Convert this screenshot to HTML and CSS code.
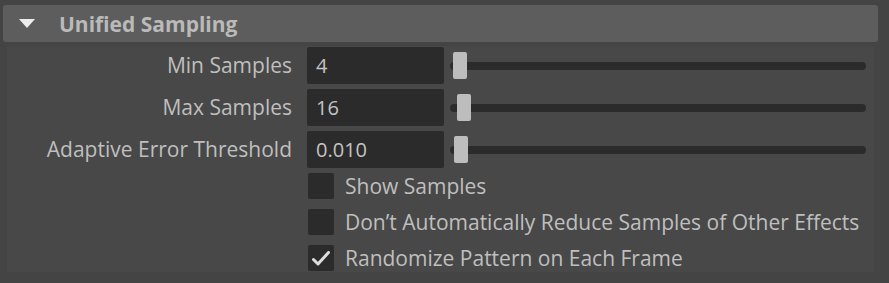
FILE: index.html
```html
<!DOCTYPE html>
<html lang="en">
<head>
    <meta charset="UTF-8">
    <title>Unified Sampling</title>
    <link rel="stylesheet" href="styles.css">
</head>
<body>
    <div class="section">
        <div class="section-header">
            <span class="arrow"></span>
            <span class="section-title">Unified Sampling</span>
        </div>
        <div class="section-body">
            <div class="field-row">
                <label class="field-label">Min Samples</label>
                <input class="field-input" type="text" value="4">
                <div class="slider"><span class="slider-thumb thumb-min"></span></div>
            </div>
            <div class="field-row">
                <label class="field-label">Max Samples</label>
                <input class="field-input" type="text" value="16">
                <div class="slider"><span class="slider-thumb thumb-max"></span></div>
            </div>
            <div class="field-row">
                <label class="field-label">Adaptive Error Threshold</label>
                <input class="field-input" type="text" value="0.010">
                <div class="slider"><span class="slider-thumb thumb-err"></span></div>
            </div>

            <div class="checks">
                <div class="check-row">
                    <span class="check-box"></span>
                    <span class="check-label">Show Samples</span>
                </div>
                <div class="check-row">
                    <span class="check-box"></span>
                    <span class="check-label">Don’t Automatically Reduce Samples of Other Effects</span>
                </div>
                <div class="check-row">
                    <span class="check-box">
                        <svg width="18" height="15" viewBox="0 0 18 15">
                            <path d="M1.5 8.5 L6 13 L16.5 1.5" fill="none" stroke="#dcdcdc" stroke-width="3" stroke-linecap="round" stroke-linejoin="round"/>
                        </svg>
                    </span>
                    <span class="check-label">Randomize Pattern on Each Frame</span>
                </div>
            </div>
        </div>
    </div>
</body>
</html>
```

FILE: styles.css
```css
body {
    margin: 0;
    background-color: #444444;
    font-family: "Open Sans", "Noto Sans", sans-serif;
    color: #bfbfbf;
}
.section {
    padding: 5px 11px 0 3px;
}
.section-header {
    display: flex;
    align-items: center;
    height: 37px;
    background-color: #5d5d5d;
    border-radius: 3px;
}
.arrow {
    width: 0;
    height: 0;
    margin-left: 16px;
    border-left: 8px solid transparent;
    border-right: 8px solid transparent;
    border-top: 9px solid #ececec;
}
.section-title {
    margin-left: 24px;
    font-size: 21px;
    font-weight: bold;
    color: #bababa;
}
.section-body {
    margin: 4px 4px 0 4px;
    padding: 1px 0 1px 0;
    background-color: #484848;
}
.field-row {
    display: grid;
    grid-template-columns: 285px 137px 1fr;
    column-gap: 15px;
    align-items: center;
    height: 37px;
    margin-bottom: 5px;
}
.field-row .slider {
    margin-left: -9px;
}
.field-label {
    text-align: right;
    font-size: 21px;
    line-height: 37px;
}
.field-input {
    height: 37px;
    box-sizing: border-box;
    border: none;
    border-radius: 2px;
    background-color: #2b2b2b;
    color: #c4c4c4;
    font-family: inherit;
    font-size: 20px;
    padding: 0 0 0 9px;
    width: 137px;
}
.slider {
    position: relative;
    height: 8px;
    margin-right: 8px;
    background-color: #2b2b2b;
    border-radius: 4px;
}
.slider-thumb {
    position: absolute;
    top: -10px;
    width: 14px;
    height: 27px;
    background-color: #bdbdbd;
    border-radius: 2px;
}
.thumb-min { left: 3px; }
.thumb-max { left: 7px; }
.thumb-err { left: 4px; }
.checks {
    display: flex;
    flex-direction: column;
    gap: 10px;
    margin-top: 3px;
    padding-left: 301px;
}
.check-row {
    display: flex;
    align-items: center;
    height: 26px;
}
.check-box {
    display: flex;
    align-items: center;
    justify-content: center;
    width: 26px;
    height: 26px;
    margin-right: 11px;
    background-color: #2b2b2b;
    border-radius: 2px;
}
.check-label {
    font-size: 21px;
    white-space: nowrap;
}
```
